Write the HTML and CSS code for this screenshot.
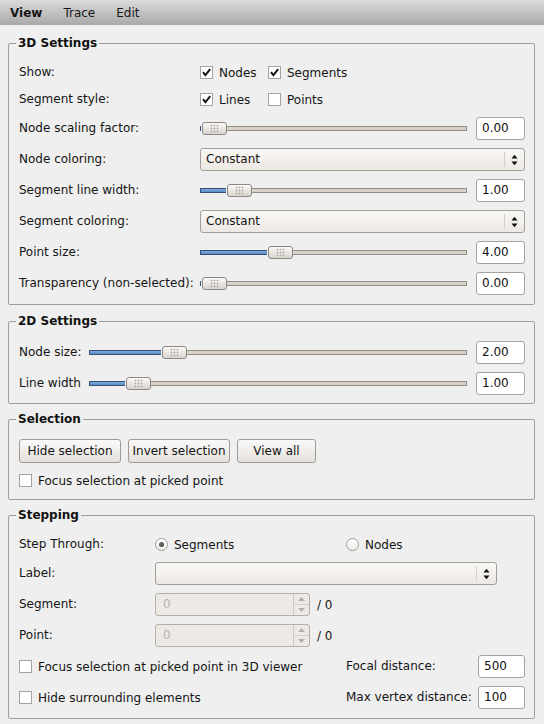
FILE: index.html
```html
<!DOCTYPE html>
<html>
<head>
<meta charset="utf-8">
<title>View</title>
<link rel="stylesheet" href="styles.css">
</head>
<body>
<div class="menubar">
  <span class="menu active">View</span>
  <span class="menu">Trace</span>
  <span class="menu">Edit</span>
</div>
<main class="panel">
  <fieldset class="group g3d">
    <legend>3D Settings</legend>
    <div class="grid grid3d">
      <div class="lbl">Show:</div>
      <div class="checks span2">
        <span class="chk w68"><span class="box"><svg viewBox="0 0 11 11" width="11" height="11"><path d="M2 5.2 L4.4 8.2 L9.2 2.2" fill="none" stroke="#111" stroke-width="1.9"/></svg></span>Nodes</span>
        <span class="chk"><span class="box"><svg viewBox="0 0 11 11" width="11" height="11"><path d="M2 5.2 L4.4 8.2 L9.2 2.2" fill="none" stroke="#111" stroke-width="1.9"/></svg></span>Segments</span>
      </div>
      <div class="lbl">Segment style:</div>
      <div class="checks span2">
        <span class="chk w68"><span class="box"><svg viewBox="0 0 11 11" width="11" height="11"><path d="M2 5.2 L4.4 8.2 L9.2 2.2" fill="none" stroke="#111" stroke-width="1.9"/></svg></span>Lines</span>
        <span class="chk"><span class="box"></span>Points</span>
      </div>
      <div class="lbl">Node scaling factor:</div>
      <div class="slider"><span class="fill" style="width:0px"></span><span class="thumb"></span><span class="rest"></span></div>
      <div class="edit">0.00</div>
      <div class="lbl">Node coloring:</div>
      <div class="combo span2"><span class="val">Constant</span><span class="arrows"><svg viewBox="0 0 7 12" width="7" height="12"><path d="M0.5 4.5 L3.5 0.8 L6.5 4.5Z M0.5 7.5 L3.5 11.2 L6.5 7.5Z" fill="#111"/></svg></span></div>
      <div class="lbl">Segment line width:</div>
      <div class="slider"><span class="fill" style="width:26px"></span><span class="thumb"></span><span class="rest"></span></div>
      <div class="edit">1.00</div>
      <div class="lbl">Segment coloring:</div>
      <div class="combo span2"><span class="val">Constant</span><span class="arrows"><svg viewBox="0 0 7 12" width="7" height="12"><path d="M0.5 4.5 L3.5 0.8 L6.5 4.5Z M0.5 7.5 L3.5 11.2 L6.5 7.5Z" fill="#111"/></svg></span></div>
      <div class="lbl">Point size:</div>
      <div class="slider"><span class="fill" style="width:67px"></span><span class="thumb"></span><span class="rest"></span></div>
      <div class="edit">4.00</div>
      <div class="lbl">Transparency (non-selected):</div>
      <div class="slider"><span class="fill" style="width:0px"></span><span class="thumb"></span><span class="rest"></span></div>
      <div class="edit">0.00</div>
    </div>
  </fieldset>

  <fieldset class="group g2d">
    <legend>2D Settings</legend>
    <div class="grid grid2d">
      <div class="lbl">Node size:</div>
      <div class="slider"><span class="fill" style="width:72px"></span><span class="thumb"></span><span class="rest"></span></div>
      <div class="edit">2.00</div>
      <div class="lbl">Line width</div>
      <div class="slider"><span class="fill" style="width:36px"></span><span class="thumb"></span><span class="rest"></span></div>
      <div class="edit">1.00</div>
    </div>
  </fieldset>

  <fieldset class="group gsel">
    <legend>Selection</legend>
    <div class="stack">
      <div class="buttons">
        <button class="btn w102">Hide selection</button>
        <button class="btn w102">Invert selection</button>
        <button class="btn w79">View all</button>
      </div>
      <span class="chk"><span class="box"></span>Focus selection at picked point</span>
    </div>
  </fieldset>

  <fieldset class="group gstep">
    <legend>Stepping</legend>
    <div class="stack">
      <div class="row">
        <span class="lbl c136">Step Through:</span>
        <span class="chk c191"><span class="radio on"></span>Segments</span>
        <span class="chk"><span class="radio"></span>Nodes</span>
      </div>
      <div class="row">
        <span class="lbl c136">Label:</span>
        <div class="combo c342"><span class="val"></span><span class="arrows"><svg viewBox="0 0 7 12" width="7" height="12"><path d="M0.5 4.5 L3.5 0.8 L6.5 4.5Z M0.5 7.5 L3.5 11.2 L6.5 7.5Z" fill="#111"/></svg></span></div>
      </div>
      <div class="row">
        <span class="lbl c136">Segment:</span>
        <div class="spin"><span class="val">0</span><span class="btns"><span><svg viewBox="0 0 7 4" width="7" height="4"><path d="M0 4 L3.5 0 L7 4Z" fill="#b3afaa"/></svg></span><span><svg viewBox="0 0 7 4" width="7" height="4"><path d="M0 0 L3.5 4 L7 0Z" fill="#b3afaa"/></svg></span></span></div>
        <span class="of">/ 0</span>
      </div>
      <div class="row">
        <span class="lbl c136">Point:</span>
        <div class="spin"><span class="val">0</span><span class="btns"><span><svg viewBox="0 0 7 4" width="7" height="4"><path d="M0 4 L3.5 0 L7 4Z" fill="#b3afaa"/></svg></span><span><svg viewBox="0 0 7 4" width="7" height="4"><path d="M0 0 L3.5 4 L7 0Z" fill="#b3afaa"/></svg></span></span></div>
        <span class="of">/ 0</span>
      </div>
      <div class="row">
        <span class="chk c327"><span class="box"></span>Focus selection at picked point in 3D viewer</span>
        <span class="lbl grow">Focal distance:</span>
        <div class="edit w47">500</div>
      </div>
      <div class="row">
        <span class="chk c327"><span class="box"></span>Hide surrounding elements</span>
        <span class="lbl grow">Max vertex distance:</span>
        <div class="edit w47">100</div>
      </div>
    </div>
  </fieldset>
</main>
</body>
</html>
```

FILE: styles.css
```css
* { box-sizing: border-box; }
html, body { margin: 0; padding: 0; }
body {
  width: 544px;
  height: 724px;
  overflow: hidden;
  background: #efefef;
  font-family: "DejaVu Sans", "Liberation Sans", sans-serif;
  font-size: 12px;
  color: #151515;
}

.menubar {
  height: 25px;
  display: flex;
  align-items: center;
  gap: 21px;
  padding-left: 10px;
  background: linear-gradient(#dadada, #a9a9a9);
  color: #161616;
}
.menu { line-height: 16px; }
.menu.active { font-weight: bold; }

.panel { padding: 0 9px 0 8px; }

.group {
  margin: 0;
  padding: 12px 9px 9px 10px;
  border: 1px solid #9e9e9e;
  border-radius: 2px;
  min-width: 0;
}
.g3d { margin-top: 10px; }
.g2d { margin-top: 8px; padding-bottom: 8px; }
.gsel { margin-top: 7px; }
.gstep { margin-top: 7px; }
.group legend {
  margin-left: -3px;
  padding: 0 2px;
  font-weight: bold;
  line-height: 16px;
  color: #111;
}

.grid {
  display: grid;
  row-gap: 8px;
  align-items: center;
}
.grid3d { grid-template-columns: 181px 1fr 49px; }
.grid2d { grid-template-columns: 70px 1fr 49px; }
.span2 { grid-column: 2 / 4; }

.lbl { line-height: 19px; white-space: nowrap; }

.checks { display: flex; align-items: center; }
.chk {
  display: flex;
  align-items: center;
  gap: 6px;
  height: 19px;
  white-space: nowrap;
}
.w68 { width: 68px; }
.box {
  width: 13px;
  height: 13px;
  border: 1px solid #a6a29d;
  background: #fff;
  display: flex;
  align-items: center;
  justify-content: center;
  flex: none;
}
.box svg { display: block; }

.radio {
  width: 13px;
  height: 13px;
  border-radius: 50%;
  border: 1px solid #9f9b96;
  background: linear-gradient(#ffffff, #efede9);
  display: flex;
  align-items: center;
  justify-content: center;
  flex: none;
}
.radio.on::after {
  content: "";
  width: 5px;
  height: 5px;
  border-radius: 50%;
  background: radial-gradient(circle at 40% 40%, #777, #2c2c2c);
}

.slider {
  display: flex;
  align-items: center;
  height: 23px;
  margin-right: 9px;
}
.fill {
  height: 5px;
  flex: none;
  border: 1px solid #334f74;
  border-right: none;
  background: linear-gradient(#7eaade, #5a8cc4);
  border-radius: 1px 0 0 1px;
}
.thumb {
  width: 25px;
  height: 13px;
  flex: none;
  margin-left: 1px;
  border: 1px solid #8d8883;
  border-radius: 3px;
  background: linear-gradient(#fcfbfa, #e6e2dd 60%, #d9d4ce);
  display: flex;
  align-items: center;
  justify-content: center;
}
.thumb::before {
  content: "";
  width: 9px;
  height: 9px;
  background: radial-gradient(circle, #ada69e 0.8px, transparent 1.1px) 0 0 / 3px 3px;
}
.rest {
  flex: 1;
  height: 5px;
  border: 1px solid #938d86;
  border-left: none;
  background: #d9d2c9;
  border-radius: 0 1px 1px 0;
}

.edit {
  height: 23px;
  border: 1px solid #a7a29c;
  border-radius: 3px;
  background: #fff;
  padding-left: 5px;
  line-height: 21px;
  color: #111;
}
.w47 { width: 47px; flex: none; }

.combo {
  height: 23px;
  border: 1px solid #a39e98;
  border-radius: 3px;
  background: linear-gradient(#f9f8f6, #ece8e3);
  display: flex;
  align-items: center;
}
.combo .val { flex: 1; padding-left: 5px; line-height: 21px; }
.combo .arrows {
  width: 20px;
  height: 15px;
  border-left: 1px solid #d3cec8;
  display: flex;
  align-items: center;
  justify-content: center;
}
.combo .arrows svg { display: block; }

.stack { display: flex; flex-direction: column; gap: 8px; }
.buttons { display: flex; gap: 7px; }
.btn {
  height: 24px;
  padding: 0;
  border: 1px solid #9f9a94;
  border-radius: 3px;
  background: linear-gradient(#fbfaf9, #e5e1dc);
  font: inherit;
  color: #151515;
}
.w102 { width: 102px; }
.w79 { width: 79px; }

.row { display: flex; align-items: center; min-height: 19px; }
.c136 { width: 136px; flex: none; }
.c191 { width: 191px; flex: none; }
.c327 { width: 327px; flex: none; }
.c342 { width: 342px; flex: none; }
.grow { flex: 1; }

.spin {
  width: 155px;
  height: 23px;
  flex: none;
  border: 1px solid #b4afa9;
  border-radius: 3px;
  background: #edeae6;
  display: flex;
}
.spin .val { flex: 1; padding-left: 7px; line-height: 21px; color: #b7b3ae; }
.spin .btns {
  width: 16px;
  border-left: 1px solid #cfcac4;
  display: flex;
  flex-direction: column;
}
.spin .btns span {
  flex: 1;
  display: flex;
  align-items: center;
  justify-content: center;
}
.spin .btns span + span { border-top: 1px solid #d6d1cb; }
.spin .btns svg { display: block; }
.of { margin-left: 7px; }
```
